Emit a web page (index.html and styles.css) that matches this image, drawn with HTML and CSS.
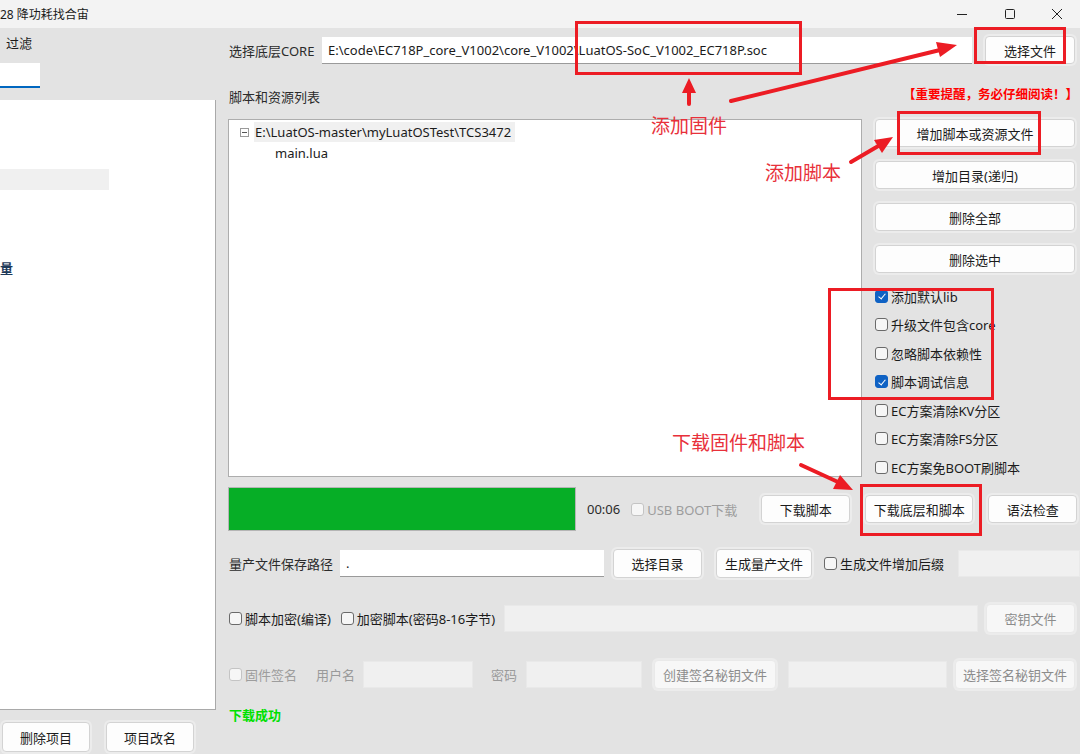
FILE: index.html
```html
<!DOCTYPE html>
<html lang="zh-CN">
<head>
  <meta charset="UTF-8">
  <title>LuatTools</title>
  <link rel="stylesheet" href="styles.css">
</head>
<body>
  <div class="titlebar">
    <span class="title">28 降功耗找合宙</span>
    <div class="win-controls">
      <span class="wc"><svg width="12" height="12" viewBox="0 0 12 12"><path d="M1 6.5h10" stroke="#222" stroke-width="1"/></svg></span>
      <span class="wc"><svg width="12" height="12" viewBox="0 0 12 12"><rect x="1.5" y="1.5" width="9" height="9" rx="1" fill="none" stroke="#222" stroke-width="1"/></svg></span>
      <span class="wc wc-close"><svg width="12" height="12" viewBox="0 0 12 12"><path d="M1 1l10 10M11 1L1 11" stroke="#222" stroke-width="1"/></svg></span>
    </div>
  </div>

  <div class="main">
    <!-- project list (left) -->
    <div class="left">
      <div class="left-label">过滤</div>
      <div class="filter"></div>
      <div class="project-list">
        <div class="proj-row selected"></div>
        <div class="proj-row item">量</div>
      </div>
      <div class="left-buttons">
        <button class="btn">删除项目</button>
        <button class="btn">项目改名</button>
      </div>
    </div>

    <!-- right panel -->
    <div class="right">
      <div class="row row-core">
        <span class="label">选择底层CORE</span>
        <div class="input core-input">E:\code\EC718P_core_V1002\core_V1002\LuatOS-SoC_V1002_EC718P.soc</div>
        <button class="btn btn-file">选择文件</button>
      </div>

      <div class="row row-list-head">
        <span class="label">脚本和资源列表</span>
        <span class="notice">【重要提醒，务必仔细阅读！】</span>
      </div>

      <div class="row row-files">
        <div class="tree">
          <div class="tree-node">
            <span class="toggle"></span>
            <span class="node-text">E:\LuatOS-master\myLuatOSTest\TCS3472</span>
          </div>
          <div class="tree-leaf">main.lua</div>
        </div>
        <div class="side">
          <button class="btn side-btn">增加脚本或资源文件</button>
          <button class="btn side-btn">增加目录(递归)</button>
          <button class="btn side-btn">删除全部</button>
          <button class="btn side-btn">删除选中</button>
          <div class="checks">
            <label class="check"><span class="cb on"></span>添加默认lib</label>
            <label class="check"><span class="cb"></span>升级文件包含core</label>
            <label class="check"><span class="cb"></span>忽略脚本依赖性</label>
            <label class="check"><span class="cb on"></span>脚本调试信息</label>
            <label class="check"><span class="cb"></span>EC方案清除KV分区</label>
            <label class="check"><span class="cb"></span>EC方案清除FS分区</label>
            <label class="check"><span class="cb"></span>EC方案免BOOT刷脚本</label>
          </div>
        </div>
      </div>

      <div class="row row-download">
        <div class="progress"><div class="progress-fill" style="width: 100%"></div></div>
        <span class="timer">00:06</span>
        <label class="check disabled usb"><span class="cb"></span>USB BOOT下载</label>
        <button class="btn dl-btn">下载脚本</button>
        <button class="btn dl-btn dl-wide">下载底层和脚本</button>
        <button class="btn dl-btn">语法检查</button>
      </div>

      <div class="row row-mass">
        <span class="label">量产文件保存路径</span>
        <div class="input path-input">.</div>
        <button class="btn btn-dir">选择目录</button>
        <button class="btn btn-gen">生成量产文件</button>
        <label class="check suffix"><span class="cb"></span>生成文件增加后缀</label>
        <div class="input off suffix-input"></div>
      </div>

      <div class="row row-encrypt">
        <label class="check"><span class="cb"></span>脚本加密(编译)</label>
        <label class="check enc-pass"><span class="cb"></span>加密脚本(密码8-16字节)</label>
        <div class="input off key-input"></div>
        <button class="btn off btn-key">密钥文件</button>
      </div>

      <div class="row row-sign">
        <label class="check disabled"><span class="cb"></span>固件签名</label>
        <span class="muted user-label">用户名</span>
        <div class="input off user-input"></div>
        <span class="muted pass-label">密码</span>
        <div class="input off pass-input"></div>
        <button class="btn off btn-create">创建签名秘钥文件</button>
        <div class="input off sign-input"></div>
        <button class="btn off btn-pick">选择签名秘钥文件</button>
      </div>

      <div class="status">下载成功</div>
    </div>
  </div>

  <!-- red annotations drawn over the screenshot -->
  <div class="annotations">
    <div class="mark mark-core"></div>
    <div class="mark mark-file"></div>
    <div class="mark mark-add"></div>
    <div class="mark mark-checks"></div>
    <div class="mark mark-dl"></div>
    <span class="note note-core">添加固件</span>
    <span class="note note-add">添加脚本</span>
    <span class="note note-dl">下载固件和脚本</span>
    <svg class="arrows" width="1080" height="754" viewBox="0 0 1080 754">
      <g stroke="#ec1c24" stroke-width="4" stroke-linecap="round" fill="#ec1c24">
        <line x1="689" y1="104" x2="689" y2="90"/>
        <polygon points="689,78 682,93 696,93" stroke="none"/>
        <line x1="731" y1="101" x2="940" y2="50"/>
        <polygon points="957,45 936,42 940,57" stroke="none"/>
        <line x1="851" y1="162" x2="880" y2="145"/>
        <polygon points="893,137 874,140 882,153" stroke="none"/>
        <line x1="801" y1="465" x2="838" y2="482"/>
        <polygon points="853,490 840,475 833,489" stroke="none"/>
      </g>
    </svg>
  </div>
</body>
</html>
```

FILE: styles.css
```css
/* General Reset */
* {
  margin: 0;
  padding: 0;
  box-sizing: border-box;
}

body {
  width: 1080px;
  height: 754px;
  overflow: hidden;
  position: relative;
  font-family: 'Noto Sans', 'Noto Sans CJK SC', sans-serif;
  font-size: 13px;
  color: #1b1b1b;
  background-color: #e3e3e3;
}

button {
  font-family: inherit;
  font-size: 13px;
  color: #1b1b1b;
}

/* Title bar */
.titlebar {
  height: 28px;
  background-color: #f3f3f3;
  display: flex;
  align-items: center;
  justify-content: space-between;
}

.title {
  font-size: 12px;
  white-space: nowrap;
}

.win-controls {
  display: flex;
  height: 100%;
}

.wc {
  width: 48px;
  display: flex;
  align-items: center;
  justify-content: center;
}

.wc-close {
  width: 46px;
}

/* Layout */
.main {
  display: flex;
  height: 726px;
}

/* Left panel */
.left {
  width: 216px;
  flex-shrink: 0;
  display: flex;
  flex-direction: column;
}

.left-label {
  margin-top: 6px;
  padding-left: 6px;
  height: 18px;
  line-height: 18px;
}

.filter {
  margin-top: 11px;
  width: 40px;
  height: 25px;
  background-color: #fff;
  border-bottom: 2px solid #0067c0;
}

.project-list {
  margin-top: 12px;
  height: 610px;
  background-color: #fff;
  border-right: 1px solid #a9a9a9;
  border-bottom: 1px solid #a9a9a9;
  padding-top: 69px;
}

.proj-row {
  height: 21px;
  line-height: 21px;
  white-space: nowrap;
}

.proj-row.selected {
  width: 109px;
  background-color: #f0f0f0;
}

.proj-row.item {
  margin-top: 68px;
  font-weight: bold;
  color: #1e3a5a;
}

.left-buttons {
  display: flex;
  gap: 16px;
  margin-top: 12px;
  padding-left: 2px;
}

.left-buttons .btn {
  width: 88px;
  height: 30px;
}

/* Buttons */
.btn {
  flex-shrink: 0;
  background-color: #fdfdfd;
  border: 1px solid #d3d3d3;
  border-radius: 4px;
  box-shadow: 0 0 0 2px #ececec;
  cursor: pointer;
}

.btn.off {
  color: #8c8c8c;
  background-color: #f7f7f7;
  border-color: #e9e9e9;
}

/* Right panel */
.right {
  margin-left: 12px;
  flex: 1;
  min-width: 0;
  padding-right: 5px;
  display: flex;
  flex-direction: column;
}

.row {
  display: flex;
  align-items: center;
}

.label {
  color: #2b2b2b;
  white-space: nowrap;
  flex-shrink: 0;
}

.muted {
  color: #9a9a9a;
  white-space: nowrap;
}

.input {
  height: 27px;
  line-height: 26px;
  background-color: #fff;
  border-bottom: 1px solid #9a9a9a;
  padding: 0 6px;
  white-space: nowrap;
  overflow: hidden;
  flex-shrink: 0;
}

.input.off {
  background-color: #f0f0f0;
  border: 1px solid #e9e9e9;
}

.row-core {
  margin-top: 8px;
  height: 28px;
}

.row-core .label {
  width: 94px;
  padding-left: 1px;
}

.core-input {
  flex: 1 1 0;
  min-width: 0;
}

.btn-file {
  width: 90px;
  height: 28px;
  margin-left: 13px;
}

.row-list-head {
  margin-top: 21px;
  height: 22px;
  justify-content: space-between;
}

.row-list-head .label {
  padding-left: 1px;
}

.notice {
  color: #ff0000;
  font-weight: bold;
  font-size: 12.5px;
  margin-top: -6px;
  margin-right: -3px;
}

.row-files {
  margin-top: 12px;
  height: 358px;
  align-items: flex-start;
}

.tree {
  width: 634px;
  height: 358px;
  flex-shrink: 0;
  background-color: #fff;
  border: 1px solid #adadad;
  padding: 2px 0 0 11px;
}

.tree-node {
  display: flex;
  align-items: center;
  height: 20px;
}

.toggle {
  width: 9px;
  height: 9px;
  border: 1px solid #9a9a9a;
  position: relative;
  margin-right: 5px;
}

.toggle::after {
  content: "";
  position: absolute;
  left: 1px;
  top: 3px;
  width: 5px;
  height: 1px;
  background-color: #555;
}

.node-text {
  background-color: #f0f0f0;
  padding: 0 4px 0 1px;
  height: 20px;
  line-height: 20px;
}

.tree-leaf {
  margin-left: 35px;
  height: 22px;
  line-height: 22px;
}

.side {
  margin-left: 13px;
  flex: 1;
  display: flex;
  flex-direction: column;
}

.side-btn {
  height: 28px;
  margin-bottom: 14px;
}

.side-btn:nth-child(4) {
  margin-bottom: 0;
}

.checks {
  margin-top: 9px;
  display: flex;
  flex-direction: column;
}

.check {
  display: flex;
  align-items: center;
  white-space: nowrap;
  cursor: pointer;
  flex-shrink: 0;
}

.checks .check {
  height: 28.5px;
}

.cb {
  width: 13px;
  height: 13px;
  border: 1px solid #6a6a6a;
  border-radius: 3px;
  background-color: #f6f6f6;
  margin-right: 3px;
  position: relative;
  flex-shrink: 0;
}

.cb.on {
  background-color: #0f62c4;
  border-color: #0f62c4;
}

.cb.on::after {
  content: "";
  position: absolute;
  left: 3.5px;
  top: 1.5px;
  width: 3px;
  height: 6px;
  border: solid #fff;
  border-width: 0 1.5px 1.5px 0;
  transform: rotate(40deg);
}

.check.disabled {
  color: #9d9d9d;
}

.check.disabled .cb {
  border-color: #c4c4c4;
}

/* Download row */
.row-download {
  margin-top: 10px;
  height: 44px;
}

.progress {
  width: 348px;
  height: 44px;
  flex-shrink: 0;
  border: 1px solid #b5b5b5;
  background-color: #e6e6e6;
}

.progress-fill {
  height: 100%;
  background-color: #06ae26;
}

.timer {
  margin-left: 11px;
  color: #2b2b2b;
}

.usb {
  margin-left: 11px;
}

.dl-btn {
  width: 89px;
  height: 28px;
  margin-left: 15px;
}

.usb + .dl-btn {
  margin-left: 24px;
}

.dl-wide {
  width: 108px;
}

/* Mass production row */
.row-mass {
  margin-top: 18px;
  height: 28px;
}

.row-mass .label {
  width: 112px;
  padding-left: 1px;
}

.path-input {
  width: 264px;
}

.btn-dir {
  width: 89px;
  height: 29px;
  margin-left: 9px;
}

.btn-gen {
  width: 96px;
  height: 29px;
  margin-left: 14px;
}

.suffix {
  margin-left: 12px;
}

.suffix-input {
  margin-left: 14px;
  flex: 1;
  margin-right: -5px;
}

/* Encryption row */
.row-encrypt {
  margin-top: 27px;
  height: 29px;
}

.row-encrypt .check:first-child {
  margin-left: 1px;
}

.enc-pass {
  margin-left: 10px;
}

.key-input {
  flex: 1;
  margin-left: 9px;
}

.btn-key {
  width: 89px;
  height: 29px;
  margin-left: 8px;
}

/* Signature row */
.row-sign {
  margin-top: 27px;
  height: 29px;
}

.row-sign .check {
  margin-left: 1px;
}

.user-label {
  margin-left: 19px;
}

.user-input {
  width: 110px;
  margin-left: 8px;
}

.pass-label {
  margin-left: 18px;
}

.pass-input {
  width: 116px;
  margin-left: 9px;
}

.btn-create {
  width: 122px;
  height: 29px;
  margin-left: 12px;
}

.sign-input {
  flex: 1;
  margin-left: 12px;
}

.btn-pick {
  width: 120px;
  height: 29px;
  margin-left: 8px;
}

.status {
  margin-top: 16px;
  padding-left: 1px;
  color: #00e000;
  font-weight: bold;
}

/* Annotations */
.annotations {
  position: absolute;
  left: 0;
  top: 0;
  width: 1080px;
  height: 754px;
  pointer-events: none;
}

.arrows {
  position: absolute;
  left: 0;
  top: 0;
}

.mark {
  position: absolute;
  border: 3px solid #ec1c24;
}

.mark-core {
  left: 575px;
  top: 21px;
  width: 227px;
  height: 54px;
}

.mark-file {
  left: 974px;
  top: 27px;
  width: 92px;
  height: 37px;
}

.mark-add {
  left: 897px;
  top: 111px;
  width: 144px;
  height: 44px;
}

.mark-checks {
  left: 828px;
  top: 288px;
  width: 166px;
  height: 112px;
}

.mark-dl {
  left: 860px;
  top: 484px;
  width: 122px;
  height: 52px;
}

.note {
  position: absolute;
  color: #e8303a;
  font-size: 19px;
  line-height: 24px;
  white-space: nowrap;
}

.note-core {
  left: 651px;
  top: 114px;
}

.note-add {
  left: 765px;
  top: 161px;
}

.note-dl {
  left: 672px;
  top: 431px;
}
```
